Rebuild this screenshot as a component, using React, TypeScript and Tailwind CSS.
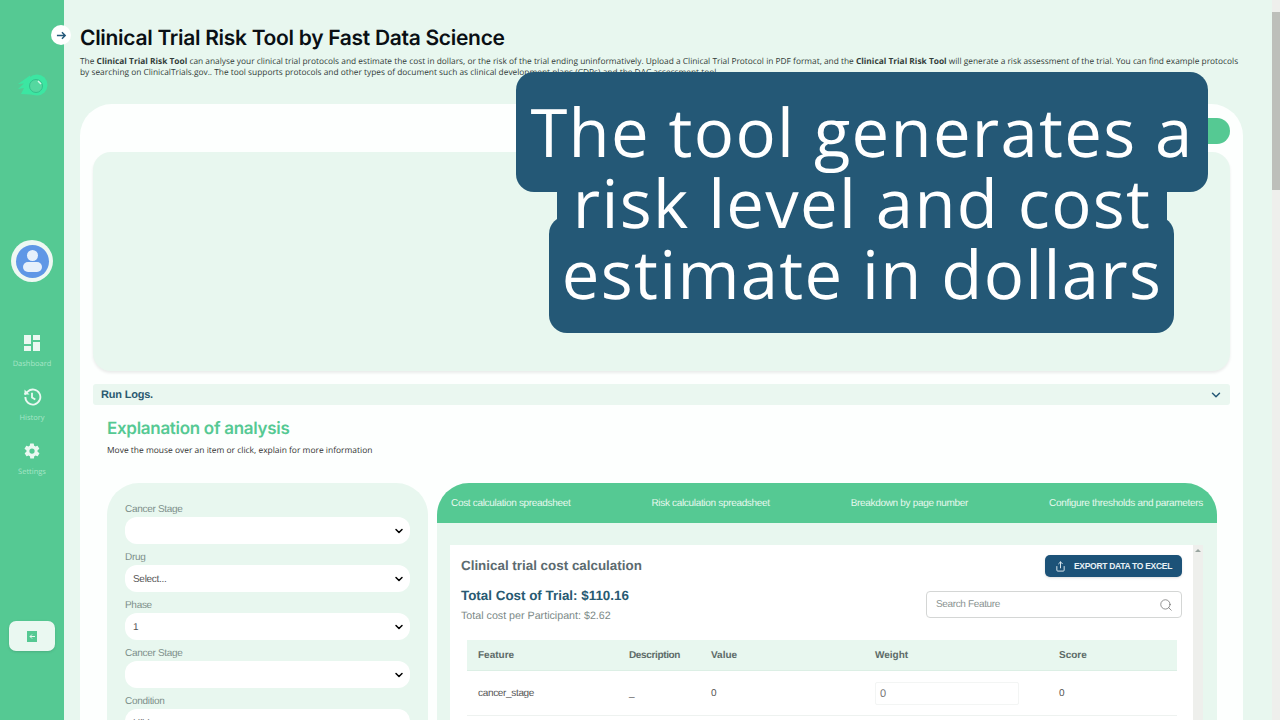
import {ChevronDown, Search, Share} from 'lucide-react'

const selects = [
    {label: 'Cancer Stage', value: ''},
    {label: 'Drug', value: 'Select...'},
    {label: 'Phase', value: '1'},
    {label: 'Cancer Stage', value: ''},
    {label: 'Condition', value: 'HIV'},
]

const tabs = [
    'Cost calculation spreadsheet',
    'Risk calculation spreadsheet',
    'Breakdown by page number',
    'Configure thresholds and parameters',
]

function Logo() {
    return (
        <svg width="34" height="24" viewBox="0 0 34 24" fill="none">
            <path d="M15 1.500 L3 10 L9 9.500 L3 15 L9 14 L6 20 L15 20.500 L22 21 Z" fill="#3ce6a2" />
            <circle cx="22" cy="11" r="10.500" fill="#3ce6a2" />
            <circle cx="21" cy="12" r="6.500" fill="#55d8a0" stroke="#35c08c" strokeWidth="1" />
            <path d="M23 7 L26 10" stroke="#d6faea" strokeWidth="1.400" />
        </svg>
    )
}

function DashboardIcon() {
    return (
        <svg width="16" height="16" viewBox="0 0 16 16" fill="#eaf8f1">
            <rect x="0" y="0" width="7" height="9" />
            <rect x="9" y="0" width="7" height="5" />
            <rect x="0" y="11" width="7" height="5" />
            <rect x="9" y="7" width="7" height="9" />
        </svg>
    )
}

function HistoryIcon() {
    return (
        <svg width="20" height="20" viewBox="0 0 24 24" fill="none" stroke="#eaf8f1" strokeWidth="2.200">
            <path d="M4 12a9 9 0 1 0 2.800-6.500L3 9" />
            <path d="M3 3v6h6" fill="#eaf8f1" stroke="none" />
            <path d="M12 7v5.500l4 2.500" />
        </svg>
    )
}

function GearIcon() {
    return (
        <svg width="18" height="18" viewBox="0 0 24 24" fill="#eaf8f1">
            <path fillRule="evenodd" d="M19.400 13a7.600 7.600 0 0 0 0-2l2.100-1.600a.5.5 0 0 0 .1-.7l-2-3.400a.5.5 0 0 0-.6-.2l-2.500 1a7.300 7.300 0 0 0-1.700-1l-.4-2.700a.5.5 0 0 0-.5-.4h-4a.5.5 0 0 0-.5.4l-.4 2.700a7.300 7.300 0 0 0-1.700 1l-2.500-1a.5.5 0 0 0-.6.2l-2 3.400a.5.5 0 0 0 .1.7L4.600 11a7.600 7.600 0 0 0 0 2l-2.100 1.600a.5.5 0 0 0-.1.7l2 3.400c.1.2.4.3.6.2l2.500-1c.5.4 1.100.7 1.700 1l.4 2.700c0 .2.2.4.5.4h4c.3 0 .5-.2.5-.4l.4-2.700c.6-.3 1.200-.6 1.700-1l2.500 1c.2.1.5 0 .6-.2l2-3.400a.5.5 0 0 0-.1-.7L19.400 13ZM12 15.500a3.500 3.500 0 1 1 0-7 3.500 3.500 0 0 1 0 7Z" />
        </svg>
    )
}

function NavItem({icon, label}: {icon: React.ReactNode; label: string}) {
    return (
        <div className="flex flex-col items-center h-[54px]">
            <div className="h-[20px] flex items-center justify-center">{icon}</div>
            <span className="mt-[5px] text-[7.500px] leading-[12px] text-[#a9e6c8] font-['Open_Sans',sans-serif]">{label}</span>
        </div>
    )
}

function Sidebar() {
    return (
        <aside className="w-[64px] h-full shrink-0 bg-[#55c993] flex flex-col items-center relative">
            <div className="mt-[74px]"><Logo /></div>
            <div className="mt-[142px] w-[42px] h-[42px] rounded-full bg-[#eef8f3] flex items-center justify-center">
                <div className="w-[33px] h-[33px] rounded-full bg-[#5f97e6] flex flex-col items-center overflow-hidden">
                    <div className="mt-[5px] w-[11px] h-[11px] rounded-full bg-[#e6f0fb]" />
                    <div className="mt-[1px] w-[19px] h-[10px] rounded-[5px] bg-[#e6f0fb]" />
                </div>
            </div>
            <div className="mt-[51px] flex flex-col">
                <NavItem icon={<DashboardIcon />} label="Dashboard" />
                <NavItem icon={<HistoryIcon />} label="History" />
                <NavItem icon={<GearIcon />} label="Settings" />
            </div>
            <div className="mt-[126px] w-[46px] h-[30px] rounded-[7px] bg-[#eaf8f1] shadow-sm flex items-center justify-center">
                <svg width="10" height="11" viewBox="0 0 10 11">
                    <rect width="10" height="11" fill="#55c993" />
                    <path d="M8 5.500H3M5 3.500 3 5.500l2 2" stroke="#eaf8f1" strokeWidth="1" fill="none" />
                </svg>
            </div>
            <div className="absolute left-[51px] top-[25px] w-[20px] h-[20px] rounded-full bg-white flex items-center justify-center">
                <svg width="11" height="11" viewBox="0 0 12 12" fill="none" stroke="#24587a" strokeWidth="1.600">
                    <path d="M1 6h9M6.500 2.500 10 6l-3.500 3.500" />
                </svg>
            </div>
        </aside>
    )
}

function SelectField({label, value}: {label: string; value: string}) {
    return (
        <div className="h-[48px]">
            <div className="h-[21px] text-[10px] leading-[27px] tracking-[-0.300px] text-[#7d8f8a]">{label}</div>
            <div className="h-[27px] rounded-[12px] bg-white flex items-center justify-between pl-[8px] pr-[5px] text-[10px] tracking-[-0.300px] text-[#555]">
                <span className="pt-[1px]">{value}</span>
                <ChevronDown size={12} strokeWidth={3} className="text-black" />
            </div>
        </div>
    )
}

function CostTable() {
    return (
        <div className="mt-[16px] ml-[17px] mr-[16px] text-[10px]">
            <div className="h-[31px] bg-[#e8f7ef] border-b border-[#dcefe5] grid grid-cols-[151px_82px_164px_184px_1fr] items-center pl-[11px] font-bold text-[#5d6b68]">
                <span>Feature</span>
                <span className="tracking-[-0.360px]">Description</span>
                <span>Value</span>
                <span>Weight</span>
                <span>Score</span>
            </div>
            <div className="h-[45px] border-b border-[#eef2f0] grid grid-cols-[151px_82px_164px_184px_1fr] items-center pl-[11px] text-[#555]">
                <span className="tracking-[-0.330px]">cancer_stage</span>
                <span>_</span>
                <span>0</span>
                <span className="w-[144px] h-[23px] border border-[#f3f5f4] rounded-[2px] flex items-center pl-[4px] pt-[2px] text-[11px] text-[#777]">0</span>
                <span>0</span>
            </div>
        </div>
    )
}

function TabPanel() {
    return (
        <div className="flex-1 flex flex-col min-w-0">
            <div className="h-[40px] shrink-0 rounded-t-[32px] bg-[#55c993] flex items-center justify-between px-[14px] text-[10px] tracking-[-0.320px] text-[#e6f8ee]">
                {tabs.map(t => <span key={t}>{t}</span>)}
            </div>
            <div className="flex-1 bg-[#e8f7ef] pt-[22px] pl-[13px] flex">
                <div className="w-[743px] bg-white pt-[10px]">
                    <div className="flex items-start justify-between px-[11px]">
                        <h3 className="text-[13.400px] leading-[22px] font-bold text-[#5c6b70]">Clinical trial cost calculation</h3>
                        <button className="h-[22px] w-[137px] rounded-[5px] bg-[#1c5278] shadow flex items-center justify-center gap-[8px] text-[8.500px] tracking-[-0.300px] font-bold text-[#e8f1f5]">
                            <Share size={11} />
                            EXPORT DATA TO EXCEL
                        </button>
                    </div>
                    <div className="mt-[8px] flex items-start justify-between px-[11px]">
                        <div>
                            <div className="text-[13.400px] leading-[22px] font-bold text-[#285a72]">Total Cost of Trial: $110.16</div>
                            <div className="mt-[1px] text-[10.700px] leading-[16px] text-[#7c8a88]">Total cost per Participant: $2.62</div>
                        </div>
                        <div className="mt-[6px] w-[256px] h-[27px] rounded-[4px] border border-[#d4d6d5] flex items-center justify-between pl-[9px] pr-[8px] text-[10px] tracking-[-0.350px] text-[#8a9391]">
                            <span>Search Feature</span>
                            <Search size={14} strokeWidth={1.200} className="text-[#666]" />
                        </div>
                    </div>
                    <CostTable />
                </div>
                <div className="w-[10px] bg-[#eeefec] flex justify-center pt-[4px]">
                    <span className="w-0 h-0 border-x-[3px] border-x-transparent border-b-[3px] border-b-[#9aa5a0]" />
                </div>
            </div>
        </div>
    )
}

function Caption() {
    return (
        <div className="absolute left-[516px] top-[72px] w-[692px] h-[261px]">
            <div className="absolute left-0 top-0 w-[692px] h-[120px] rounded-[18px] bg-[#245876]" />
            <div className="absolute left-[33px] top-[144px] w-[625px] h-[117px] rounded-[18px] bg-[#245876]" />
            <div className="absolute left-[41px] top-[100px] w-[610px] h-[60px] bg-[#245876]" />
            <div className="relative pt-[24px] text-center text-[67px] leading-[71px] text-white font-['Open_Sans',sans-serif] tracking-[1.300px]">
                <div>The tool generates a</div>
                <div>risk level and cost</div>
                <div>estimate in dollars</div>
            </div>
        </div>
    )
}

export default function App() {
    return (
        <div className="w-[1280px] h-[720px] overflow-hidden relative flex bg-[#e8f7ef] font-['Liberation_Sans',sans-serif] [text-rendering:geometricPrecision]">
            <Sidebar />
            <main className="w-[1206px] shrink-0 pl-[16px] pt-[26px] h-full overflow-hidden">
                <h1 className="text-[21px] leading-[26px] font-semibold text-[#0a0f14] font-['Inter',sans-serif] tracking-[-0.300px]">Clinical Trial Risk Tool by Fast Data Science</h1>
                <p className="mt-[4px] w-[1165px] text-[8.360px] leading-[11px] text-[#333d3a] font-['Open_Sans',sans-serif]">
                    The <b>Clinical Trial Risk Tool</b> can analyse your clinical trial protocols and estimate the cost in dollars, or the risk of the trial ending uninformatively. Upload a Clinical Trial Protocol in PDF format, and the <b>Clinical Trial Risk Tool</b> will generate a risk assessment of the trial. You can find example protocols by searching on ClinicalTrials.gov.. The tool supports protocols and other types of document such as clinical development plans (CDPs) and the DAC assessment tool.
                </p>
                <section className="mt-[26px] w-[1163px] h-[700px] rounded-t-[32px] bg-[#fdfffe] relative">
                    <div className="absolute right-[13px] top-[14px] w-[30px] h-[26px] rounded-r-full bg-[#55c993]" />
                    <div className="pt-[48px] px-[13px]">
                        <div className="h-[219px] rounded-[18px] bg-[#e8f7ef] shadow-[0_2px_3px_rgba(0,0,0,0.08)]" />
                        <div className="mt-[13px] h-[21px] rounded-[3px] bg-[#eaf7f0] flex items-center justify-between pl-[8px] pr-[7px]">
                            <span className="pt-[1px] text-[11px] tracking-[-0.200px] font-bold text-[#2b5a70]">Run Logs.</span>
                            <ChevronDown size={14} strokeWidth={2.500} className="text-[#245876]" />
                        </div>
                    </div>
                    <div className="mt-[12px] pl-[27px]">
                        <h2 className="text-[17px] leading-[24px] font-semibold text-[#55c993] font-['Inter',sans-serif] tracking-[-0.300px]">Explanation of analysis</h2>
                        <p className="mt-[4px] text-[8.450px] leading-[12px] text-[#333] font-['Open_Sans',sans-serif]">Move the mouse over an item or click, explain for more information</p>
                    </div>
                    <div className="mt-[26px] pl-[27px] pr-[26px] flex gap-[9px] h-[300px]">
                        <div className="w-[321px] shrink-0 rounded-t-[32px] bg-[#e8f7ef] pt-[13px] px-[18px]">
                            {selects.map((s, i) => <SelectField key={i} label={s.label} value={s.value} />)}
                        </div>
                        <TabPanel />
                    </div>
                </section>
            </main>
            <div className="absolute right-0 top-0 w-[8px] h-full bg-[#eeefec]">
                <div className="mt-[12px] w-full h-[178px] bg-[#bdbfba]" />
            </div>
            <Caption />
        </div>
    )
}
